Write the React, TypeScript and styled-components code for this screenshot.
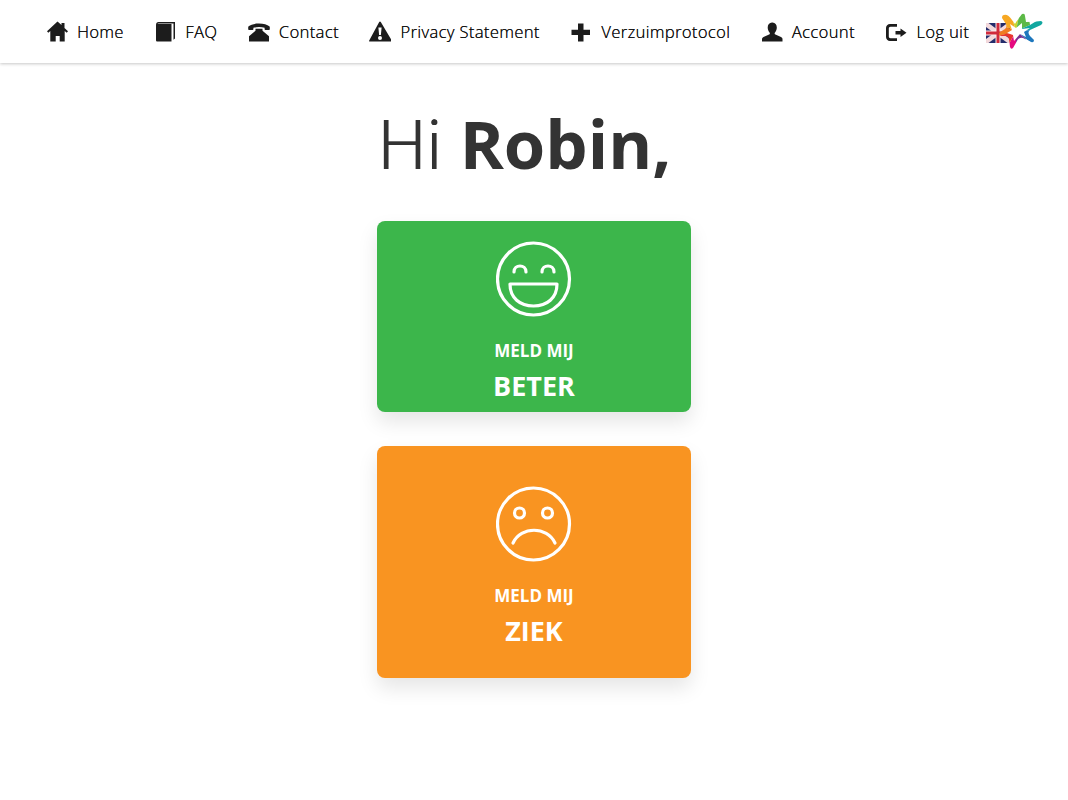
import React from 'react'
import styled, { createGlobalStyle } from 'styled-components'

const GlobalStyle = createGlobalStyle`
  html, body {
    margin: 0;
    padding: 0;
    background: #fff;
    font-family: 'Open Sans', sans-serif;
    color: #333;
  }
`

const Page = styled.div`
  min-height: 800px;
  overflow: hidden;
`

const Header = styled.header`
  height: 63px;
  display: flex;
  align-items: center;
  padding-left: 46px;
  box-shadow: 0 1px 3px rgba(0, 0, 0, 0.22);
`

const NavList = styled.nav`
  display: flex;
  align-items: center;
  gap: 30.5px;
`

const NavItem = styled.a`
  display: flex;
  align-items: center;
  gap: 9px;
  color: #111;
  font-size: 16.5px;
  font-weight: 300;
  letter-spacing: 0.4px;
  line-height: 22px;
  white-space: nowrap;
  text-shadow: 0.2px 0 0 #111;
`

const NavIcon = styled.svg`
  width: 22px;
  height: 22px;
  fill: #1c1c1c;
  flex: none;
`

const Logo = styled.svg`
  width: 57px;
  height: 38px;
  margin-left: 17px;
  flex: none;
`

const Main = styled.main`
  display: flex;
  flex-direction: column;
  align-items: center;
`

const Greeting = styled.h1`
  margin: 34px 0 0;
  padding-right: 19px;
  height: 124px;
  font-size: 68px;
  line-height: 92px;
  font-weight: 300;
  color: #333;
  text-shadow: 0.6px 0 0 #333, -0.6px 0 0 #333, 0 0.4px 0 #333;

  strong {
    font-size: 67px;
    font-weight: 700;
    text-shadow: none;
  }
`

const ActionCard = styled.button<{ $color: string; $height: number; $top: number }>`
  width: 314px;
  height: ${props => props.$height}px;
  padding: ${props => props.$top}px 0 0;
  margin-bottom: 34px;
  border: none;
  border-radius: 8px;
  background: ${props => props.$color};
  box-shadow: 0 10px 20px rgba(0, 0, 0, 0.1);
  color: #fff;
  font-family: inherit;
  display: flex;
  flex-direction: column;
  align-items: center;
`

const Face = styled.svg`
  width: 76px;
  height: 76px;
  fill: none;
  stroke: #fff;
  stroke-width: 3.2;
  stroke-linecap: round;
  stroke-linejoin: round;
`

const CardSmall = styled.span`
  margin-top: 22px;
  font-size: 17px;
  line-height: 24px;
  font-weight: 700;
`

const CardLarge = styled.span`
  margin-top: 5px;
  font-size: 27px;
  line-height: 36px;
  font-weight: 700;
`

const icons: Record<string, React.ReactNode> = {
  home: <path d="M11.500.5 15.500 4V2h3v5l3.500 3.200-1.300 1.500-2-1.600V20.500h-5V15h-4v5.500H4.300V10.100l-2 1.600L1 10.200z" />,
  book: (
    <path d="M3.500 3H17.500V20.500H3.500C2.500 20.500 2 20 2 19V4C2 2 3 1 4.500 1H21V17.500L19.500 18.700V2.500H4.500C4 2.500 3.500 2.700 3.500 3Z" />
  ),
  phone: (
    <path d="M11 2.500c4.600 0 8.400 1.100 10.300 2.800.4.400.5.800.5 1.300v1.600c0 .5-.3.800-.8.800h-3.600c-.5 0-.8-.3-.8-.8V6.800c-1.700-.5-3.600-.8-5.600-.8s-3.900.3-5.600.8v1.400c0 .5-.3.800-.8.800H1c-.5 0-.8-.3-.8-.8V6.600c0-.5.100-.9.500-1.300C2.600 3.600 6.400 2.500 11 2.500zM7.500 7.800h7v2l6.500 5.500v5.200H1v-5.200l6.500-5.500z" />
  ),
  warning: (
    <path
      fillRule="evenodd"
      d="M11.800 1 22.800 19.500c.3.500 0 1-.5 1H.7c-.5 0-.8-.5-.5-1L10.200 1c.4-.7 1.200-.7 1.600 0zM9.400 6.500l.7 7.500h1.800l.7-7.500zM11 15a2 2 0 1 0 0 4 2 2 0 0 0 0-4z"
    />
  ),
  plus: <path d="M8 2.500h5.500V8.700H20v5.300H13.500v6.500H8V14H1.500V8.700H8z" />,
  user: (
    <path d="M11.500 1.500c2.700 0 4.300 2.200 4.300 5 0 2-.8 3.900-1.800 5-.6.700-.5 1.700.4 2.100l5.600 2.400c1 .5 1.500 1.200 1.500 2.200v2.300H1v-2.300c0-1 .5-1.700 1.500-2.200l5.600-2.400c.9-.4 1-1.400.4-2.100-1-1.100-1.800-3-1.800-5 0-2.800 1.600-5 4.300-5z" />
  ),
  logout: (
    <path
      fillRule="evenodd"
      d="M5 3h7v2.800H5.500c-1 0-1.700.7-1.700 1.700v8c0 1 .7 1.700 1.700 1.700H12v2.800H5c-2.300 0-4-1.700-4-4V7c0-2.300 1.700-4 4-4zM15.500 7.500l6 4.200-6 4.200v-2.400h-5V9.900h5z"
    />
  ),
}

const navItems = [
  { icon: 'home', label: 'Home' },
  { icon: 'book', label: 'FAQ' },
  { icon: 'phone', label: 'Contact' },
  { icon: 'warning', label: 'Privacy Statement' },
  { icon: 'plus', label: 'Verzuimprotocol' },
  { icon: 'user', label: 'Account' },
  { icon: 'logout', label: 'Log uit' },
]

const starOutline =
  'M18 2Q22 1 26 7L29 11Q32 6 36 1Q39 0 39 3L40 9Q48 9 55 8Q58 9 55 12L44 17Q41 19 44 23L48 27Q48 30 45 29L37 25Q33 24 31 28L27 35Q25 37 24 34L23 26Q22 23 19 23L14 23Q12 21 14 19L19 16Q21 14 20 11L16 5Q16 2 18 2Z'

// colour wedges fanned out from the middle of the star
const starWedges = [
  { points: '30 18 10 10 14 -2 24 -2', fill: '#f7a823' },
  { points: '30 18 24 -2 34 -2', fill: '#c6d52c' },
  { points: '30 18 34 -2 42 -2 44 12', fill: '#5cb947' },
  { points: '30 18 44 12 60 2 60 16', fill: '#12a7a0' },
  { points: '30 18 60 16 52 34 40 26', fill: '#1d77bd' },
  { points: '30 18 40 26 30 40', fill: '#7a2f92' },
  { points: '30 18 30 40 18 40', fill: '#e5097f' },
  { points: '30 18 18 40 8 24', fill: '#e8352e' },
  { points: '30 18 8 24 10 10', fill: '#ef7c22' },
]

function FlagStarLogo() {
  return (
    <Logo viewBox="0 0 57 38">
      <defs>
        <clipPath id="star-clip">
          <path d={starOutline} />
        </clipPath>
        <filter id="star-soft">
          <feGaussianBlur stdDeviation="0.6" />
        </filter>
      </defs>
      <rect x="0" y="10" width="24" height="20" fill="#232c6b" />
      <path d="M0 10h2.500l21.500 16v4h-2.500L0 14zM24 10v4L2.500 30H0v-4l21.500-16z" fill="#f3d9dc" />
      <path d="M0 17.500h24v5H0zM9.500 10h5v20h-5z" fill="#fbeeee" />
      <path d="M0 18.500h24v3H0zM10.500 10h3v20h-3z" fill="#d02a3c" />
      <g clipPath="url(#star-clip)">
        {starWedges.map(wedge => (
          <polygon key={wedge.fill} points={wedge.points} fill={wedge.fill} />
        ))}
        <path
          d="M24 11 30 15 36 10 36 16 44 15 38 19 40 24 34 21 28 28 27 22 21 20 26 17Z"
          fill="#fff"
          filter="url(#star-soft)"
        />
      </g>
    </Logo>
  )
}

function HappyFace() {
  return (
    <Face viewBox="0 0 76 76">
      <circle cx="37.500" cy="38" r="36" />
      <path d="M14 43h47c0 14-10 22-23.500 22S14 57 14 43z" />
      <path d="M18 31c0-8 12-8 12 0M46 31c0-8 12-8 12 0" />
    </Face>
  )
}

function SadFace() {
  return (
    <Face viewBox="0 0 76 76">
      <circle cx="37.500" cy="38" r="36" />
      <circle cx="23.500" cy="27" r="5" />
      <circle cx="51.500" cy="27" r="5" />
      <path d="M17 57c8-17 34-17 42 0" />
    </Face>
  )
}

export default function App() {
  return (
    <Page>
      <GlobalStyle />
      <Header>
        <NavList>
          {navItems.map(item => (
            <NavItem key={item.label}>
              <NavIcon viewBox="0 0 22 22">{icons[item.icon]}</NavIcon>
              {item.label}
            </NavItem>
          ))}
        </NavList>
        <FlagStarLogo />
      </Header>
      <Main>
        <Greeting>
          Hi <strong>Robin,</strong>
        </Greeting>
        <ActionCard $color="#3cb64b" $height={191} $top={20}>
          <HappyFace />
          <CardSmall>MELD MIJ</CardSmall>
          <CardLarge>BETER</CardLarge>
        </ActionCard>
        <ActionCard $color="#f99421" $height={232} $top={40}>
          <SadFace />
          <CardSmall>MELD MIJ</CardSmall>
          <CardLarge>ZIEK</CardLarge>
        </ActionCard>
      </Main>
    </Page>
  )
}
